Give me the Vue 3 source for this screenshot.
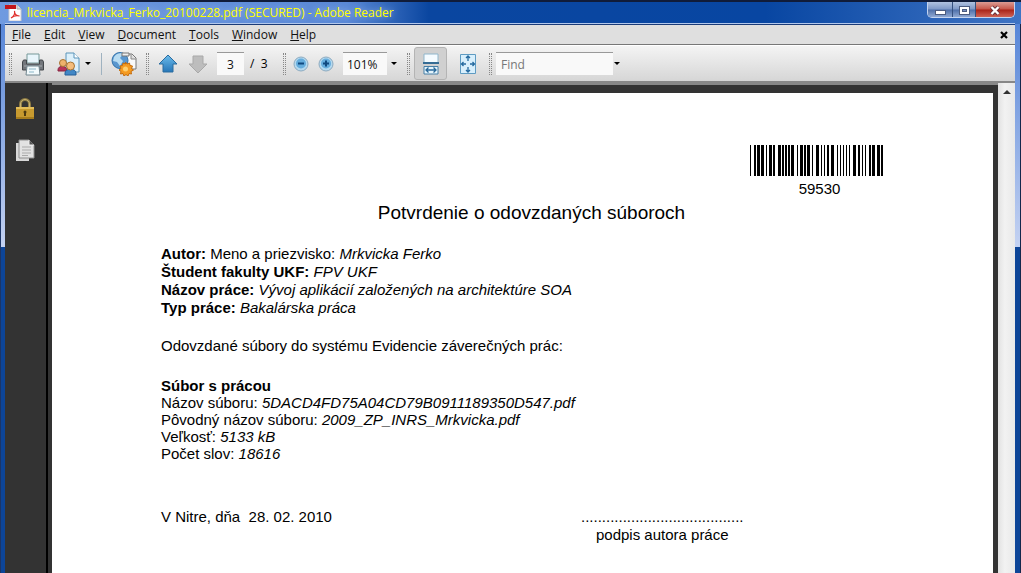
<script setup>
import { ref } from 'vue'

const menus = ['File', 'Edit', 'View', 'Document', 'Tools', 'Window', 'Help']
const page = ref('3')
const zoom = ref('101%')
const find = ref('')

// [start, width] of every bar, in barcode modules
const bars = [
  [0, 1], [4, 2], [7, 3], [11, 3], [16, 1], [19, 3], [23, 2], [28, 3], [32, 2], [35, 2], [38, 2], [41, 3],
  [47, 1], [50, 3], [54, 2], [57, 3], [62, 1], [66, 3], [71, 1], [74, 1], [77, 2], [81, 3], [87, 1], [90, 1],
  [93, 1], [96, 1], [99, 1], [103, 3], [108, 2], [112, 1], [115, 1], [119, 2], [122, 3], [127, 3], [131, 2],
]
</script>

<template>
  <div class="window">
    <header class="title">
      <svg class="app-icon" width="17" height="17" viewBox="0 0 17 17">
        <path d="M4 1h8l4 4v12H4z" fill="#fff" stroke="#c9c9cf" />
        <path d="M12 1v4h4" fill="#ddd" stroke="#aaa" />
        <path d="M0 1h11v4H0z" fill="#c3161c" />
        <path d="M6 14c3-2 4-5 3.500-7 0 4 2 5 5 5-3-1-6 0-8.500 2z" fill="none" stroke="#e0302c" stroke-width="1.200" />
      </svg>
      <h1>licencia_Mrkvicka_Ferko_20100228.pdf (SECURED) - Adobe Reader</h1>
      <div class="controls">
        <button aria-label="Minimize"><svg width="24" height="14"><rect x="7.500" y="7.500" width="10" height="4" fill="#fff" stroke="#4c5c80" /></svg></button>
        <button aria-label="Maximize"><svg width="22" height="14"><rect x="6.500" y="3.500" width="10" height="8" fill="#fff" stroke="#4c5c80" /><rect x="9.500" y="6.500" width="4" height="2" fill="#7890c0" stroke="#4c5c80" /></svg></button>
        <button class="close" aria-label="Close"><svg width="38" height="14"><path d="M15.500 4l7 7m0-7l-7 7" stroke="#68303a" stroke-width="4" /><path d="M15.500 4l7 7m0-7l-7 7" stroke="#fff" stroke-width="2.400" /></svg></button>
      </div>
    </header>

    <div class="client">
      <nav class="menu">
        <button v-for="m in menus" :key="m"><u>{{ m[0] }}</u>{{ m.slice(1) }}</button>
        <button class="doc-close" aria-label="Close document"><svg width="8" height="8"><path d="M1 1l6 6M7 1L1 7" stroke="#000" stroke-width="2.200" /></svg></button>
      </nav>

      <div class="toolbar">
        <i class="grip"></i>
        <button class="print" aria-label="Print">
          <svg width="24" height="24" viewBox="0 0 24 24">
            <path d="M6 2h12v9H6z" fill="#e8f5fb" stroke="#799" />
            <path d="M2.500 8h3v4h13V8h3l1 2v8H1.500v-8z" fill="#73777c" stroke="#44484c" />
            <path d="M3 14h18" stroke="#a8adb1" />
            <path d="M6 14h12l1 9H5z" fill="#f2fafc" stroke="#71858e" />
            <path d="M8 17h7M8 20h5" stroke="#8ab6c8" />
          </svg>
        </button>
        <button class="share" aria-label="Collaborate">
          <svg width="24" height="24" viewBox="0 0 24 24">
            <path d="M9 1h8l5 5v14H9z" fill="#dcf0fb" stroke="#5b94b9" />
            <path d="M17 1v5h5" fill="#fff" stroke="#5b94b9" />
            <path d="M1 18c0-5 8-5 9 0v1H1z" fill="#b93459" stroke="#852540" />
            <circle cx="6" cy="11" r="3.500" fill="#eeb26c" stroke="#a87534" />
            <path d="M8 23v-2c0-5 11-5 11 0v2z" fill="#4187c6" stroke="#245f99" />
            <circle cx="13.500" cy="14" r="4" fill="#f5bd7c" stroke="#a87534" />
          </svg>
        </button>
        <button class="drop d1" aria-label="Collaborate options"></button>
        <i class="rule"></i>
        <button class="web" aria-label="Online services">
          <svg width="26" height="25" viewBox="0 0 26 25">
            <path d="M13 3h8l4 4v11H13z" fill="#f9f9f9" stroke="#777" />
            <path d="M20 3v5h5" fill="#ddd" stroke="#888" />
            <circle cx="9" cy="9.500" r="8" fill="#5996ce" stroke="#3472aa" />
            <path d="M3 6c3-5 8-4 9-3L9 7l3 3-3 5-3-4-4-1z" fill="#b8dcf2" />
            <path d="M11 2h7v3h-7z" fill="#eee" stroke="#777" />
            <path d="M14.500 11l1.500 2 2.500-1 .5 2.500 2.500.5-1 2.500 2 1.500-2.500 1.500.5 2.500-2.500-.5-1 2.500-2-1.500-2 1.500-1-2.500-2.500.5.500-2.500-2-1.500 2-1.500-1-2.500 2.500-.5.500-2.500 2.500 1z" fill="#f59b21" stroke="#c46c0d" />
            <circle cx="14.500" cy="18" r="2.500" fill="#ffd06f" />
          </svg>
        </button>
        <i class="grip"></i>
        <button class="up" aria-label="Previous page">
          <svg width="20" height="20" viewBox="0 0 20 20">
            <defs><linearGradient id="blue" x2="0" y2="1"><stop stop-color="#6cbceb" /><stop offset="1" stop-color="#2676b8" /></linearGradient></defs>
            <path d="M10 1l9 9h-4v8H5v-8H1z" fill="url(#blue)" stroke="#2b6c9f" stroke-linejoin="round" />
          </svg>
        </button>
        <button class="down" aria-label="Next page" disabled>
          <svg width="20" height="20" viewBox="0 0 20 20"><path d="M10 19l9-9h-4V2H5v8H1z" fill="#bdbdbd" stroke="#a9a9a9" stroke-linejoin="round" /></svg>
        </button>
        <input v-model="page" class="field page-no" aria-label="Page number">
        <span class="total">/&nbsp; 3</span>
        <i class="grip"></i>
        <button class="zoom-out" aria-label="Zoom out">
          <svg width="16" height="16" viewBox="0 0 16 16"><circle cx="8" cy="8" r="7" fill="#b4d9ef" stroke="#8eabc0" /><circle cx="8" cy="7.500" r="5" fill="#65addd" /><path d="M5 7.500h6" stroke="#10497f" stroke-width="2" /></svg>
        </button>
        <button class="zoom-in" aria-label="Zoom in">
          <svg width="16" height="16" viewBox="0 0 16 16"><circle cx="8" cy="8" r="7" fill="#b4d9ef" stroke="#8eabc0" /><circle cx="8" cy="7.500" r="5" fill="#65addd" /><path d="M5 7.500h6M8 4.500v6" stroke="#10497f" stroke-width="2" /></svg>
        </button>
        <input v-model="zoom" class="field zoom" aria-label="Zoom level">
        <button class="drop d2" aria-label="Zoom presets"></button>
        <i class="grip"></i>
        <button class="fit active" aria-label="Fit width">
          <svg width="18" height="22" viewBox="0 0 18 22">
            <path d="M2 1h14v9H2z" fill="#f4fbff" stroke="#8fb6cc" />
            <path d="M1 10h16" stroke="#356c94" stroke-width="2" />
            <path d="M2 13.500h14V21H2z" fill="#e4f4fc" stroke="#467fa6" />
            <path d="M4 17h10M6.500 14.500L4 17l2.500 2.500M11.500 14.500L14 17l-2.500 2.500" fill="none" stroke="#28689a" stroke-width="1.300" />
          </svg>
        </button>
        <button class="fit" aria-label="Fit page">
          <svg width="18" height="22" viewBox="0 0 18 22">
            <path d="M1.500 1.500h15v19h-15z" fill="#d8effc" stroke="#5e9bc2" />
            <path d="M9 3v5M9 14v5M2.500 11H7M11 11h4.500M7 5l2-2 2 2M7 17l2 2 2-2M4.500 9l-2 2 2 2M13.500 9l2 2-2 2" fill="none" stroke="#24699f" stroke-width="1.300" />
          </svg>
        </button>
        <i class="grip"></i>
        <input v-model="find" class="field find" placeholder="Find" aria-label="Find">
        <button class="drop d3" aria-label="Find options"></button>
      </div>

      <div class="work">
        <aside class="side">
          <button aria-label="Security settings">
            <svg width="20" height="23" viewBox="0 0 20 23">
              <path d="M5.500 11V7a4.500 4.500 0 0 1 9 0v4" fill="none" stroke="#8c7a43" stroke-width="3" />
              <path d="M5.500 11V7a4.500 4.500 0 0 1 9 0v4" fill="none" stroke="#c7b271" />
              <path d="M1 10h18v12H1z" fill="#c79a2f" />
              <path d="M1 10h18v2H1z" fill="#e2bd5a" /><path d="M1 20h18v2H1z" fill="#a67c1d" />
              <circle cx="10" cy="15" r="1.500" fill="#4d3a10" /><path d="M9 15h2v4H9z" fill="#4d3a10" />
            </svg>
          </button>
          <button aria-label="Pages">
            <svg width="20" height="23" viewBox="0 0 20 23">
              <path d="M1 4h13v18H1z" fill="#d8d8d8" />
              <path d="M4 1h10l5 5v13H4z" fill="#e2e2e2" stroke="#8e8e8e" />
              <path d="M14 1v5h5" fill="#555" stroke="#eee" />
              <path d="M7 8h9M7 11h9M7 14h9M7 16.500h6" stroke="#aaa" />
            </svg>
          </button>
        </aside>
        <main class="canvas">
          <article class="paper">
            <figure class="barcode">
              <svg width="133" height="31" viewBox="0 0 133 31" shape-rendering="crispEdges">
                <rect v-for="b in bars" :key="b[0]" :x="b[0]" y="0" :width="b[1]" height="31" />
              </svg>
              <figcaption>59530</figcaption>
            </figure>
            <h2>Potvrdenie o odovzdaných súboroch</h2>
            <p class="info">
              <b>Autor:</b> Meno a priezvisko: <em>Mrkvicka Ferko</em><br>
              <b>Študent fakulty UKF:</b> <em>FPV UKF</em><br>
              <b>Názov práce:</b> <em>Vývoj aplikácií založených na architektúre SOA</em><br>
              <b>Typ práce:</b> <em>Bakalárska práca</em>
            </p>
            <p>Odovzdané súbory do systému Evidencie záverečných prác:</p>
            <p>
              <b>Súbor s prácou</b><br>
              Názov súboru: <em>5DACD4FD75A04CD79B0911189350D547.pdf</em><br>
              Pôvodný názov súboru: <em>2009_ZP_INRS_Mrkvicka.pdf</em><br>
              Veľkosť: <em>5133 kB</em><br>
              Počet slov: <em>18616</em>
            </p>
            <div class="sign">
              <span>V Nitre, dňa&nbsp; 28. 02. 2010</span>
              <span class="line">.......................................<br>podpis autora práce</span>
            </div>
          </article>
        </main>
        <div class="scroll"><button aria-label="Scroll up"><svg width="8" height="5"><path d="M0 5l4-4 4 4z" fill="#333" /></svg></button></div>
      </div>
    </div>
  </div>
</template>

<style>
html, body, #app { height: 100%; }
body { margin: 0; overflow: hidden; }
</style>

<style scoped>
* { box-sizing: border-box; }
.window {
  display: flex; flex-direction: column; height: 100%;
  padding: 0 6px 0 5px;
  border-top: 2px solid #101c3a;
  background: linear-gradient(90deg, #6f9ae0, #5a88d6 34%, #0a46a0 42%, #0846a2 75%, #3f74c4);
  font: 12px/16px "Open Sans", "Noto Sans", sans-serif;
  position: relative;
}
.window::before, .window::after {
  content: ""; position: absolute; top: 22px; bottom: 0; width: 5px;
  background: linear-gradient(#5786d8, #c4d2f2 223px, #0d4598 223px, #0d4598);
  border-left: 1px solid #1c3566; border-right: 1px solid #b4cdf2;
}
.window::before { left: 0; }
.window::after { right: 0; width: 6px; border-left-color: #7fa6e0; border-right-color: #14284c; }
button { border: 0; padding: 0; background: none; color: inherit; font: inherit; display: flex; align-items: center; justify-content: center; }
svg { display: block; flex: none; }
.title { height: 22px; flex: none; display: flex; align-items: center; border-bottom: 1px solid #b3c8ec; }
.app-icon { margin-right: 5px; }
h1 { margin: 0; font: 12px/20px "Open Sans", "Noto Sans", sans-serif; color: #ff0; white-space: nowrap; text-shadow: 0 0 6px #a9c3ee; }
.controls { display: flex; margin-left: auto; align-self: flex-start; border: 1px solid #c4d4f0; border-top: 0; border-radius: 0 0 5px 5px; overflow: hidden; }
.controls button { height: 15px; background: linear-gradient(#b0c2e0, #7d97c6 48%, #4e6fa9 52%, #8fa8d2); border-right: 1px solid #35507f; }
.controls .close { background: linear-gradient(#dc9c94, #c65548 48%, #a92318 52%, #cf6254); border-right: 0; }
.client { flex: 1; display: flex; flex-direction: column; min-height: 0; position: relative; z-index: 1; border-top: 1px solid #1a3b78; }
.menu { flex: none; height: 20px; display: flex; align-items: center; gap: 13px; padding: 0 7px; background: #dfdfdf; border-bottom: 1px solid #777; color: #111; }
.doc-close { margin-left: auto; }
.toolbar { flex: none; height: 38px; display: flex; align-items: center; background: linear-gradient(#f4f4f4, #d6d6d6); border-top: 1px solid #fff; border-bottom: 2px solid #888; padding-left: 4px; }
.toolbar > * { flex: none; }
.grip { width: 3px; height: 22px; border: 0 dotted #888; border-width: 0 1px; }
.rule { width: 1px; height: 22px; background: #9fb2c0; margin: 0 9px 0 10px; }
.print { margin: 0 12px 0 9px; }
.drop { width: 7px; height: 10px; }
.drop::after { content: ""; border: 3px solid transparent; border-top-color: #000; border-bottom: 0; }
.d1 { margin-left: 3px; }
.web { margin-right: 9px; }
.up { margin: 0 10px 0 9px; }
.down { margin-right: 9px; }
.field { height: 23px; border: 0; border-top: 1px solid #999; border-radius: 0; background: #f9f9f9; padding: 0; font: 12px/16px "Open Sans", "Noto Sans", sans-serif; color: #111; outline: 0; }
.page-no { width: 27px; text-align: center; }
.total { width: 32px; padding-left: 6px; margin-right: 7px; white-space: nowrap; }
.zoom-out { margin: 0 9px 0 7px; }
.zoom { width: 44px; padding-left: 4px; margin-left: 9px; }
.d2 { margin: 0 10px 0 3px; }
.fit { width: 33px; height: 33px; margin-left: 4px; border-radius: 3px; }
.fit.active { background: #d0d0d0; border: 1px solid #b4b4b4; }
.fit + .grip { margin-left: 5px; }
.find { width: 117px; margin-left: 4px; padding-left: 5px; }
.find::placeholder { color: #777; opacity: 1; }
.work { flex: 1; display: flex; min-height: 0; background: #333; }
.side { flex: none; width: 43px; padding: 14px 2px 0 0; display: flex; flex-direction: column; align-items: center; gap: 19px; border-right: 2px solid #000; }
.canvas { flex: 1; min-width: 0; margin-left: 4px; padding-right: 5px; border-top: 2px solid #888; overflow: hidden; }
.paper { min-height: 100%; margin-top: 8px; padding: 52px 109px 0; background: #fff; color: #000; font: 15px/17px "Liberation Sans", Arial, sans-serif; }
.barcode { width: 133px; margin: 0 1px 0 auto; text-align: center; }
.barcode svg { margin-bottom: 4px; }
figcaption { padding-left: 6px; }
h2 { margin: 5px 0 21px; padding-left: 18px; font: 19px/22px "Liberation Sans", Arial, sans-serif; text-align: center; }
p { margin: 0 0 23px; }
.info { line-height: 18px; margin-bottom: 20px; }
.sign { display: flex; margin-top: 46px; }
.sign > span:first-child { width: 420px; }
.line { text-align: center; line-height: 18px; }
.scroll { flex: none; width: 17px; background: linear-gradient(90deg, #e2e2e2, #f2f2f2 40%, #e9e9e9); }
.scroll button { width: 17px; height: 17px; }
</style>
